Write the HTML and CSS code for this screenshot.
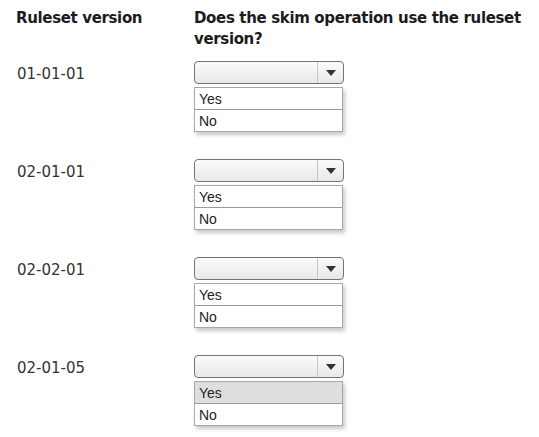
FILE: index.html
```html
<!DOCTYPE html>
<html lang="en">
<head>
    <meta charset="UTF-8">
    <meta name="viewport" content="width=device-width, initial-scale=1.0">
    <title>Ruleset version</title>
    <link rel="stylesheet" href="styles.css">
</head>
<body>
    <div class="sheet">
        <div class="head">
            <div>Ruleset version</div>
            <div>Does the skim operation use the ruleset version?</div>
        </div>

        <!-- one row per ruleset version -->
        <div class="row">
            <div class="version">01-01-01</div>
            <div class="answer">
                <div class="dropdown"><span class="field"></span><span class="toggle"><svg width="10" height="6" viewBox="0 0 10 6"><path d="M0 0h10L5 6z" fill="#333"/></svg></span></div>
                <ul class="options">
                    <li>Yes</li>
                    <li>No</li>
                </ul>
            </div>
        </div>
        <div class="row">
            <div class="version">02-01-01</div>
            <div class="answer">
                <div class="dropdown"><span class="field"></span><span class="toggle"><svg width="10" height="6" viewBox="0 0 10 6"><path d="M0 0h10L5 6z" fill="#333"/></svg></span></div>
                <ul class="options">
                    <li>Yes</li>
                    <li>No</li>
                </ul>
            </div>
        </div>
        <div class="row">
            <div class="version">02-02-01</div>
            <div class="answer">
                <div class="dropdown"><span class="field"></span><span class="toggle"><svg width="10" height="6" viewBox="0 0 10 6"><path d="M0 0h10L5 6z" fill="#333"/></svg></span></div>
                <ul class="options">
                    <li>Yes</li>
                    <li>No</li>
                </ul>
            </div>
        </div>
        <div class="row">
            <div class="version">02-01-05</div>
            <div class="answer">
                <div class="dropdown"><span class="field"></span><span class="toggle"><svg width="10" height="6" viewBox="0 0 10 6"><path d="M0 0h10L5 6z" fill="#333"/></svg></span></div>
                <ul class="options">
                    <li class="hover">Yes</li>
                    <li>No</li>
                </ul>
            </div>
        </div>
    </div>
</body>
</html>
```

FILE: styles.css
```css
body {
    margin: 0;
    background: #fff;
    font-family: "DejaVu Sans", Verdana, sans-serif;
    color: #2a2a2a;
}
.sheet {
    padding: 8px 0 0 16px;
}
.head, .row {
    display: grid;
    grid-template-columns: 178px 1fr;
}
.head {
    font-size: 15px;
    font-weight: bold;
    line-height: 21px;
    letter-spacing: -0.35px;
    color: #1c1c1c;
    margin-bottom: 11px;
}
.row {
    margin-bottom: 27px;
}
.version {
    font-size: 15px;
    line-height: 21px;
    padding: 3px 0 0 1px;
    color: #333;
}
.dropdown {
    display: flex;
    box-sizing: border-box;
    width: 150px;
    height: 23px;
    border: 1px solid #747474;
    border-radius: 4px;
    background: linear-gradient(#fbfbfb, #e8e8e8);
}
.field {
    flex: 1;
}
.toggle {
    width: 25px;
    border-left: 1px solid #c6c6c6;
    display: flex;
    align-items: center;
    justify-content: center;
}
.options {
    list-style: none;
    margin: 3px 0 0;
    padding: 0;
    width: 149px;
    box-sizing: border-box;
    border: 1px solid #a8a8a8;
    box-shadow: 2px 3px 4px rgba(0, 0, 0, 0.22);
    font-family: "Liberation Sans", Arial, sans-serif;
    font-size: 14px;
    color: #222;
}
.options li {
    height: 21px;
    line-height: 22px;
    padding: 0 4px;
}
.options li + li {
    border-top: 1px solid #9a9a9a;
}
.options li.hover {
    background: #dedede;
}
```
